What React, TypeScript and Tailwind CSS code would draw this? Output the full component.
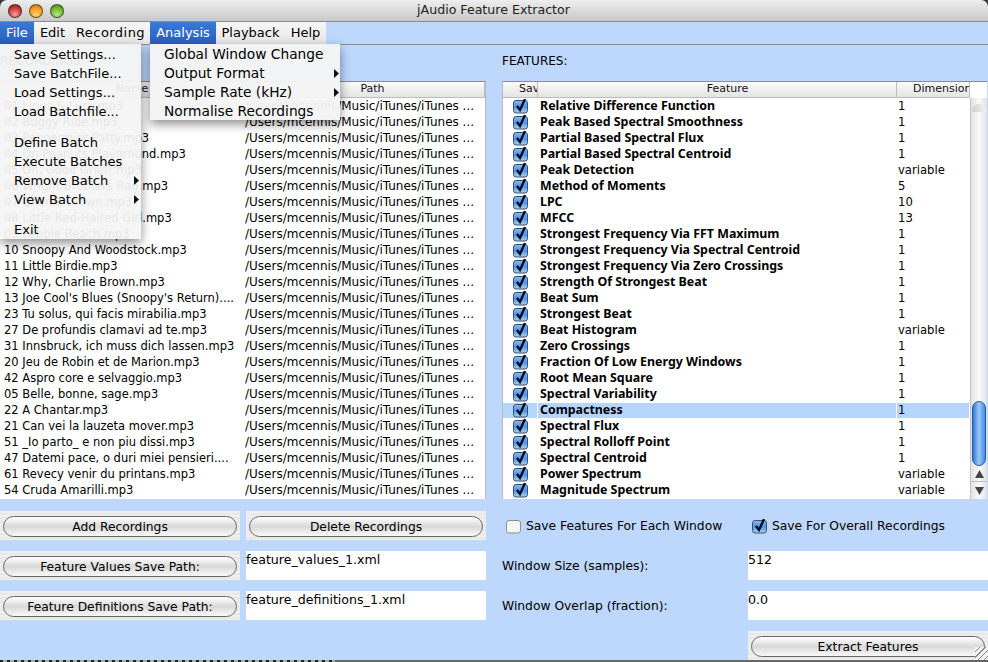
const recordings = [
  "01 Linus & Lucy.mp3",
  "02 Buggy Ride.mp3",
  "03 Peppermint Patty.mp3",
  "04 On Peanuts Playground.mp3",
  "05 Oh, Good Grief!.mp3",
  "06 Wright Brothers Rag.mp3",
  "07 Charlie Brown.mp3",
  "08 Little Red-Haired Girl.mp3",
  "09 Pebble Beach.mp3",
  "10 Snoopy And Woodstock.mp3",
  "11 Little Birdie.mp3",
  "12 Why, Charlie Brown.mp3",
  "13 Joe Cool's Blues (Snoopy's Return)....",
  "23 Tu solus, qui facis mirabilia.mp3",
  "27 De profundis clamavi ad te.mp3",
  "31 Innsbruck, ich muss dich lassen.mp3",
  "20 Jeu de Robin et de Marion.mp3",
  "42 Aspro core e selvaggio.mp3",
  "05 Belle, bonne, sage.mp3",
  "22 A Chantar.mp3",
  "21 Can vei la lauzeta mover.mp3",
  "51 _Io parto_ e non piu dissi.mp3",
  "47 Datemi pace, o duri miei pensieri....",
  "61 Revecy venir du printans.mp3",
  "54 Cruda Amarilli.mp3",
];

const features: [string, string][] = [
  ["Relative Difference Function", "1"],
  ["Peak Based Spectral Smoothness", "1"],
  ["Partial Based Spectral Flux", "1"],
  ["Partial Based Spectral Centroid", "1"],
  ["Peak Detection", "variable"],
  ["Method of Moments", "5"],
  ["LPC", "10"],
  ["MFCC", "13"],
  ["Strongest Frequency Via FFT Maximum", "1"],
  ["Strongest Frequency Via Spectral Centroid", "1"],
  ["Strongest Frequency Via Zero Crossings", "1"],
  ["Strength Of Strongest Beat", "1"],
  ["Beat Sum", "1"],
  ["Strongest Beat", "1"],
  ["Beat Histogram", "variable"],
  ["Zero Crossings", "1"],
  ["Fraction Of Low Energy Windows", "1"],
  ["Root Mean Square", "1"],
  ["Spectral Variability", "1"],
  ["Compactness", "1"],
  ["Spectral Flux", "1"],
  ["Spectral Rolloff Point", "1"],
  ["Spectral Centroid", "1"],
  ["Power Spectrum", "variable"],
  ["Magnitude Spectrum", "variable"],
];

const fileMenu = [
  ["Save Settings...", "Save BatchFile...", "Load Settings...", "Load Batchfile..."],
  ["Define Batch", "Execute Batches", "Remove Batch", "View Batch"],
  ["Exit"],
];

const pinstripe =
  "bg-[repeating-linear-gradient(180deg,#efefef_0px,#efefef_2px,#e8e8e8_2px,#e8e8e8_4px)]";

function Check({ on = true }: { on?: boolean }) {
  return (
    <svg width="16" height="15" viewBox="0 0 16 15" className="shrink-0">
      <defs>
        <linearGradient id="chk" x1="0" y1="0" x2="0" y2="1">
          <stop offset="0" stopColor="#8fbcf0" />
          <stop offset="0.5" stopColor="#4b93e6" />
          <stop offset="1" stopColor="#a9d4fa" />
        </linearGradient>
      </defs>
      <rect x="0.5" y="1.5" width="14" height="12.5" rx="2.5" fill={on ? "url(#chk)" : "#f6f6f6"} stroke={on ? "#3d4f70" : "#8f8f8f"} />
      {on && <path d="M4 7 L7 11 L12 0" fill="none" stroke="#050814" strokeWidth="2.3" />}
    </svg>
  );
}

function SubArrow({ className }: { className: string }) {
  return (
    <svg width="5" height="9" viewBox="0 0 5 9" className={"absolute top-[5px] " + className}>
      <path d="M0 0 L5 4.5 L0 9 Z" fill="#111" />
    </svg>
  );
}

function ScrollArrow({ up }: { up?: boolean }) {
  return (
    <svg width="9" height="8" viewBox="0 0 9 8">
      <path d={up ? "M4.5 0 L9 8 L0 8 Z" : "M0 0 L9 0 L4.5 8 Z"} fill="#444" />
    </svg>
  );
}

function PillButton({ label }: { label: string }) {
  return (
    <div className={"flex h-[29px] items-center px-[3px] pt-[2px] " + pinstripe}>
      <button className="h-[21px] w-full rounded-full border border-[#666] bg-gradient-to-b from-[#ffffff] via-[#d9d9d9] to-[#f8f8f8] pt-px text-[12.3px] text-black">
        {label}
      </button>
    </div>
  );
}

function Field({ value }: { value: string }) {
  return <div className="h-[29px] bg-white text-[12.6px] leading-[17px] text-black">{value}</div>;
}

function HeaderCell({ label, className }: { label: string; className: string }) {
  return (
    <div className={"flex h-full items-center overflow-hidden whitespace-nowrap border-r border-[#bdbdbd] text-[11px] text-[#111] " + className}>
      {label}
    </div>
  );
}

function TrafficLight({ color }: { color: string }) {
  return <span className={"h-[14px] w-[14px] rounded-full border border-black/50 " + color} />;
}

export default function App() {
  return (
    <div
      className="relative flex h-[662px] w-[988px] flex-col overflow-hidden bg-[#bdd7fd] text-black"
      style={{ fontFamily: '"DejaVu Sans", sans-serif' }}
    >
      {/* Title bar */}
      <div className="h-[22px] shrink-0 bg-[#3a3a3a]">
        <div className="flex h-full items-center rounded-t-[7px] border-b border-[#8c8c8c] bg-gradient-to-b from-[#eeeeee] to-[#c8c8c8] pl-[8px]">
          <div className="flex gap-[7px]">
            <TrafficLight color="bg-[radial-gradient(circle_at_50%_80%,#f3a0a0,#c8383c_60%,#8e2226)]" />
            <TrafficLight color="bg-[radial-gradient(circle_at_50%_80%,#fbd77c,#ee9a20_60%,#b56f10)]" />
            <TrafficLight color="bg-[radial-gradient(circle_at_50%_80%,#bce67e,#6fb52f_60%,#47801c)]" />
          </div>
          <div className="flex-1 pr-[65px] text-center text-[12.6px] text-[#222]">jAudio Feature Extractor</div>
        </div>
      </div>

      {/* Menu bar */}
      <div className="flex h-[23px] shrink-0 items-stretch border-b border-[#8a8f99]">
        <div className="flex bg-gradient-to-b from-[#f6f6f6] to-[#e8e8e8] text-[13px] leading-[22px]">
          <span className="w-[34px] bg-gradient-to-b from-[#3a78d8] to-[#2a5fc0] text-center text-white">File</span>
          <span className="w-[37px] text-center">Edit</span>
          <span className="w-[79px] text-center tracking-[0.45px]">Recording</span>
          <span className="w-[66px] bg-gradient-to-b from-[#3a78d8] to-[#2a5fc0] text-center text-white">Analysis</span>
          <span className="w-[69px] text-center">Playback</span>
          <span className="w-[41px] text-center">Help</span>
        </div>
      </div>

      {/* Main panels */}
      <div className="flex flex-1 gap-[16px]">
        <div className="flex w-[486px] shrink-0 flex-col">
          <div className="h-[36px] pt-[8px] text-[12px] leading-[16px]">RECORDINGS:</div>
          <div className="h-[418px] border-t border-[#8c8c8c] border-r border-r-[#bbb] bg-white">
            <div className="flex h-[16px] border-b border-[#bdbdbd] bg-gradient-to-b from-[#fbfbfb] to-[#e4e4e4]">
              <HeaderCell label="Name" className="w-[243px] justify-center pl-[22px]" />
              <HeaderCell label="Path" className="flex-1 justify-center pl-[18px]" />
            </div>
            {recordings.map((name) => (
              <div key={name} className="flex h-[16px] leading-[16px]">
                <div className="w-[245px] truncate pl-[4px] text-[11.5px]">{name}</div>
                <div className="flex-1 truncate text-[12px]">/Users/mcennis/Music/iTunes/iTunes ...</div>
              </div>
            ))}
          </div>
          <div className="mt-[12px] grid grid-cols-[240px_240px] gap-x-[6px] gap-y-[11px]">
            <PillButton label="Add Recordings" />
            <PillButton label="Delete Recordings" />
            <PillButton label="Feature Values Save Path:" />
            <Field value="feature_values_1.xml" />
            <PillButton label="Feature Definitions Save Path:" />
            <Field value="feature_definitions_1.xml" />
          </div>
        </div>

        <div className="flex flex-1 flex-col">
          <div className="h-[36px] pt-[8px] text-[12px] leading-[16px]">FEATURES:</div>
          <div className="h-[418px] w-[485px] border-t border-[#8c8c8c] border-l border-l-[#bbb] bg-white">
            <div className="flex h-[16px] w-[467px] border-b border-[#bdbdbd] bg-gradient-to-b from-[#fbfbfb] to-[#e4e4e4]">
              <HeaderCell label="Save" className="w-[35px] pl-[16px]" />
              <HeaderCell label="Feature" className="w-[359px] justify-center pl-[21px]" />
              <HeaderCell label="Dimension" className="flex-1 pl-[16px]" />
            </div>
            <div className="flex">
              <div className="w-[467px]">
                {features.map(([name, dim]) => {
                  const cell = "flex h-[15px] items-center border-r border-white " + (name === "Compactness" ? "bg-[#b5d5ff]" : "");
                  return (
                    <div key={name} className="flex h-[16px] pt-px">
                      <div className={"w-[35px] justify-center pl-[2px] " + cell}>
                        <Check />
                      </div>
                      <div className={"w-[359px] pl-[2px] text-[12.4px] font-bold " + cell} style={{ fontFamily: '"Noto Sans", sans-serif' }}>
                        {name}
                      </div>
                      <div className={"flex-1 pl-px text-[11.6px] " + cell}>{dim}</div>
                    </div>
                  );
                })}
              </div>
              {/* Scrollbar */}
              <div className="flex h-[401px] w-[17px] flex-col border-l border-[#c4c4c4] bg-gradient-to-r from-[#e2e2e2] via-[#fafafa] to-[#e2e2e2]">
                <div className="mx-[1px] mt-[6px] h-[8px] rounded-t-full bg-gradient-to-r from-[#cfcfcf] to-[#f2f2f2]" />
                <div className="flex-1" />
                <div className="mx-[1px] h-[65px] rounded-full border border-[#2458a8] bg-gradient-to-r from-[#2e79d8] via-[#9cc8f6] to-[#3d8be3]" />
                <div className="flex h-[16px] items-center justify-center border-b border-[#c0c0c0]">
                  <ScrollArrow up />
                </div>
                <div className="flex h-[17px] items-center justify-center">
                  <ScrollArrow />
                </div>
              </div>
            </div>
          </div>

          <div className="flex h-[52px] items-center pl-[4px] pt-[3px] text-[12.3px]">
            <Check on={false} />
            <span className="ml-[4px] w-[226px]">Save Features For Each Window</span>
            <Check />
            <span className="ml-[4px]">Save For Overall Recordings</span>
          </div>

          <div className="grid grid-cols-[246px_240px] gap-y-[11px]">
            <div className="flex h-[29px] items-center pt-px text-[12.3px]">Window Size (samples):</div>
            <Field value="512" />
            <div className="flex h-[29px] items-center pt-px text-[12.3px]">Window Overlap (fraction):</div>
            <Field value="0.0" />
            <div />
            <PillButton label="Extract Features" />
          </div>
        </div>
      </div>

      {/* Window edge, with the window behind peeking out */}
      <div className="flex h-[2px] shrink-0">
        <div className="w-[335px] bg-[repeating-linear-gradient(90deg,#222_0px,#222_3px,#aaa_3px,#aaa_7px)]" />
        <div className="flex-1 bg-[#666]" />
      </div>

      {/* Resize grip */}
      <div className="absolute bottom-[2px] right-0 h-[13px] w-[13px] bg-[repeating-linear-gradient(135deg,#f2f2f2_0px,#f2f2f2_3px,#8a8a8a_3px,#8a8a8a_4px)]" />

      {/* File menu */}
      <div className="absolute left-0 top-[44px] h-[195px] w-[141px] bg-[#f4f4f4]/94 pt-px text-[13px] leading-[19px] shadow-[0_4px_10px_rgba(0,0,0,0.45)]">
        {fileMenu.map((group, i) => (
          <div key={i} className={i === 1 ? "mt-[12px]" : i === 2 ? "mt-[11px]" : ""}>
            {group.map((item) => (
              <div key={item} className="relative pl-[14px]">
                {item}
                {(item === "Remove Batch" || item === "View Batch") && <SubArrow className="right-[2px]" />}
              </div>
            ))}
          </div>
        ))}
      </div>

      {/* Analysis menu */}
      <div className="absolute left-[150px] top-[44px] h-[76px] w-[190px] bg-[#f4f4f4]/96 pt-px text-[13.75px] leading-[19px] shadow-[0_4px_10px_rgba(0,0,0,0.45)]">
        {["Global Window Change", "Output Format", "Sample Rate (kHz)", "Normalise Recordings"].map((item) => (
          <div key={item} className="relative pl-[14px]">
            {item}
            {(item === "Output Format" || item === "Sample Rate (kHz)") && <SubArrow className="right-px" />}
          </div>
        ))}
      </div>
    </div>
  );
}
